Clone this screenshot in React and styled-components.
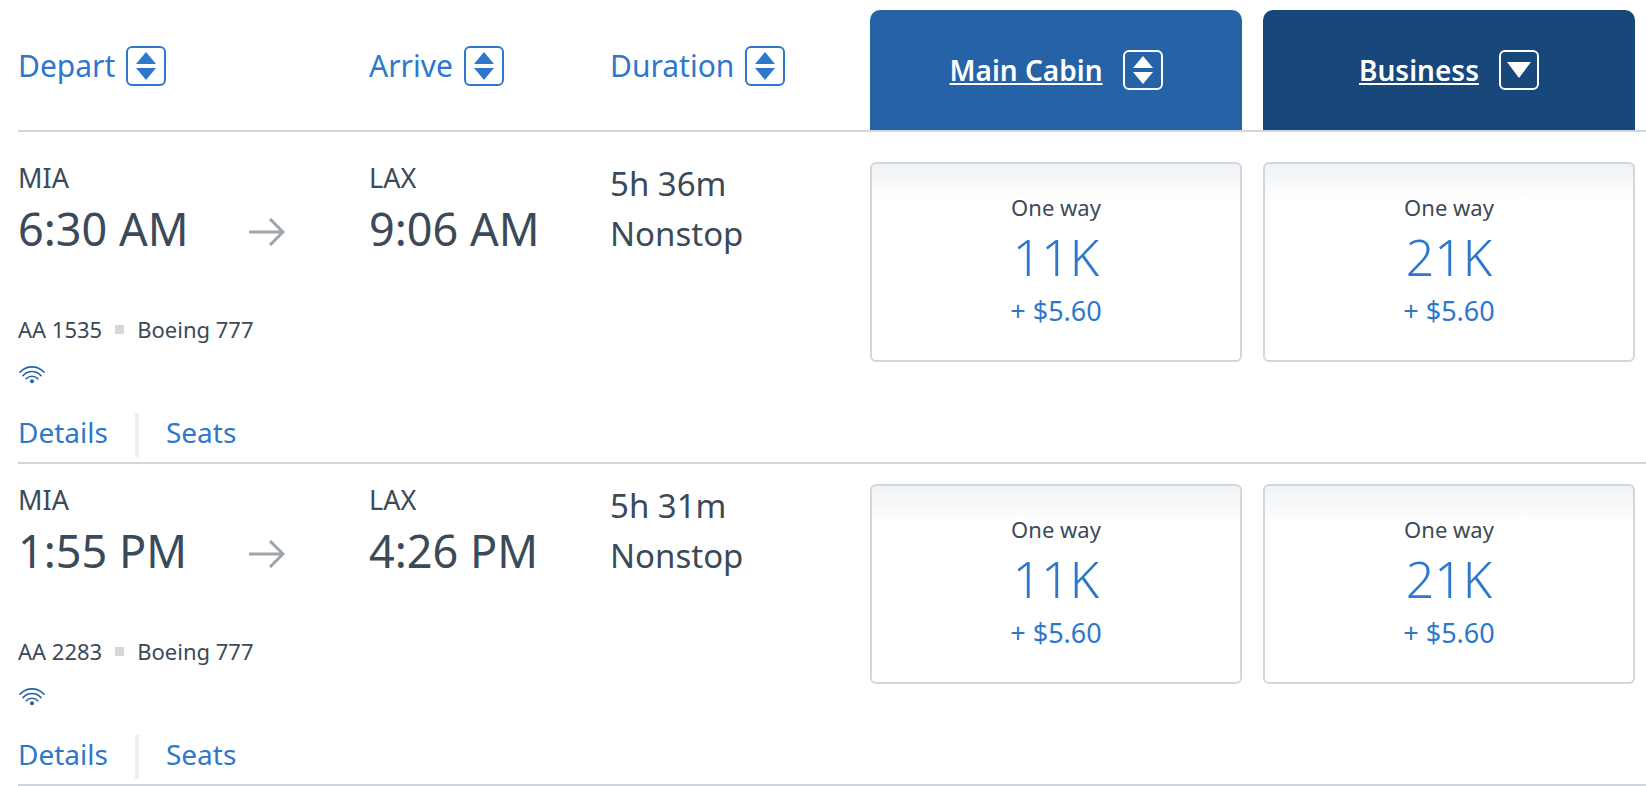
import React from "react";
import styled, { createGlobalStyle } from "styled-components";

const flights = [
  {
    id: "AA 1535",
    plane: "Boeing 777",
    from: "MIA",
    departs: "6:30 AM",
    to: "LAX",
    arrives: "9:06 AM",
    duration: "5h 36m",
    stops: "Nonstop",
    fares: ["11K", "21K"],
  },
  {
    id: "AA 2283",
    plane: "Boeing 777",
    from: "MIA",
    departs: "1:55 PM",
    to: "LAX",
    arrives: "4:26 PM",
    duration: "5h 31m",
    stops: "Nonstop",
    fares: ["11K", "21K"],
  },
];

function SortIcon() {
  return (
    <Icon width="40" height="40" viewBox="0 0 40 40" aria-hidden="true">
      <rect x="1" y="1" width="38" height="38" rx="5" />
      <path d="M20 6l10 12H10zM20 34l10-12H10z" />
    </Icon>
  );
}

function SortDownIcon() {
  return (
    <Icon width="40" height="40" viewBox="0 0 40 40" aria-hidden="true">
      <rect x="1" y="1" width="38" height="38" rx="5" />
      <path d="M8 12h24L20 28z" />
    </Icon>
  );
}

function ArrowIcon() {
  return (
    <Arrow width="36" height="28" viewBox="0 0 36 28" aria-hidden="true">
      <path d="M0 14h34M21 1l13 13-13 13" />
    </Arrow>
  );
}

function WifiIcon() {
  return (
    <Wifi width="28" height="18" viewBox="0 0 28 18" role="img" aria-label="Wi-Fi">
      <path d="M2 6.2a16.2 16.2 0 0 1 24 0M5 9.6a12 12 0 0 1 18 0M8.2 12.8a8 8 0 0 1 11.6 0" />
      <circle cx="14" cy="15.2" r="2" />
    </Wifi>
  );
}

function Flight({ flight }) {
  return (
    <Row>
      <InfoCell>
        <Airport>{flight.from}</Airport>
        <Leg>
          <Time>{flight.departs}</Time>
          <ArrowIcon />
        </Leg>
        <Aircraft>
          <span>{flight.id}</span>
          <Square />
          <span>{flight.plane}</span>
        </Aircraft>
        <WifiIcon />
        <Links>
          <a href="#details">Details</a>
          <a href="#seats">Seats</a>
        </Links>
      </InfoCell>
      <InfoCell>
        <Airport>{flight.to}</Airport>
        <Time>{flight.arrives}</Time>
      </InfoCell>
      <InfoCell>
        <Duration>{flight.duration}</Duration>
        <Duration>{flight.stops}</Duration>
      </InfoCell>
      {flight.fares.map((fare) => (
        <FareCell key={fare}>
          <Fare type="button">
            <FareType>One way</FareType>
            <Miles>{fare}</Miles>
            <Fee>+ $5.60</Fee>
          </Fare>
        </FareCell>
      ))}
    </Row>
  );
}

function App() {
  return (
    <Page>
      <GlobalStyle />
      <Results>
        <colgroup>
          <Col $width="351px" />
          <Col $width="241px" />
          <Col $width="250px" />
          <Col />
          <Col />
        </colgroup>
        <thead>
          <tr>
            {["Depart", "Arrive", "Duration"].map((label) => (
              <HeadCell key={label} scope="col">
                <SortButton type="button">
                  {label}
                  <SortIcon />
                </SortButton>
              </HeadCell>
            ))}
            <TabCell scope="col">
              <CabinTab type="button" $color="#2662a6">
                <span>Main Cabin</span>
                <SortIcon />
              </CabinTab>
            </TabCell>
            <TabCell scope="col">
              <CabinTab type="button" $color="#18477a">
                <span>Business</span>
                <SortDownIcon />
              </CabinTab>
            </TabCell>
          </tr>
        </thead>
        <tbody>
          {flights.map((flight) => (
            <Flight key={flight.id} flight={flight} />
          ))}
        </tbody>
      </Results>
    </Page>
  );
}

export default App;

const GlobalStyle = createGlobalStyle`
  * {
    box-sizing: border-box;
  }
  body {
    margin: 0;
    background: #fff;
    color: #3b4a59;
    font-family: "Noto Sans", "Open Sans", sans-serif;
  }
  button {
    font-family: inherit;
    cursor: pointer;
  }
`;

const Page = styled.main`
  padding: 10px 0 0 18px;
`;

const Results = styled.table`
  width: 100%;
  min-width: 1300px;
  table-layout: fixed;
  border-collapse: separate;
  border-spacing: 0;
`;

const Col = styled.col`
  width: ${(props) => props.$width || "auto"};
`;

const HeadCell = styled.th`
  padding: 36px 0 0;
  border-bottom: 2px solid #d0d8dd;
  text-align: left;
  vertical-align: top;
`;

const TabCell = styled.th`
  padding: 0 11px 0 10px;
  border-bottom: 2px solid #d0d8dd;
`;

const Icon = styled.svg`
  flex: none;

  rect {
    fill: none;
    stroke: currentColor;
    stroke-width: 2;
  }
  path {
    fill: currentColor;
  }
`;

const SortButton = styled.button`
  display: flex;
  align-items: center;
  gap: 11px;
  padding: 0;
  border: 0;
  background: none;
  color: #2e78cb;
  font-size: 30px;
  font-weight: 400;
  line-height: 38px;
`;

const CabinTab = styled.button`
  display: flex;
  align-items: center;
  justify-content: center;
  gap: 20px;
  width: 100%;
  height: 120px;
  padding: 0;
  border: 0;
  border-radius: 10px 10px 0 0;
  background: ${(props) => props.$color};
  color: #fff;
  font-size: 28px;
  font-weight: 600;
  line-height: 40px;

  span {
    text-decoration: underline;
    text-decoration-thickness: 2px;
    text-underline-offset: 2px;
    text-decoration-skip-ink: none;
  }
`;

const InfoCell = styled.td`
  padding: 17px 0 5px;
  border-bottom: 2px solid #d0d8dd;
  vertical-align: top;
`;

const FareCell = styled.td`
  padding: 20px 11px 0 10px;
  border-bottom: 2px solid #d0d8dd;
  vertical-align: top;
`;

const Row = styled.tr`
  &:first-child ${InfoCell} {
    padding-top: 27px;
  }
  &:first-child ${FareCell} {
    padding-top: 30px;
  }
`;

const Airport = styled.div`
  font-size: 27px;
  line-height: 38px;
`;

const Leg = styled.div`
  display: flex;
  align-items: center;
  justify-content: space-between;
  padding-right: 84px;
`;

const Time = styled.div`
  font-size: 45px;
  line-height: 64px;
`;

const Arrow = styled.svg`
  margin-top: 6px;
  fill: none;
  stroke: #9da5aa;
  stroke-width: 3;
`;

const Aircraft = styled.div`
  display: flex;
  align-items: center;
  gap: 13px;
  margin-top: 51px;
  font-size: 22px;
  line-height: 34px;
`;

const Square = styled.span`
  width: 9px;
  height: 9px;
  background: #d0d8dd;
`;

const Wifi = styled.svg`
  display: block;
  margin-top: 20px;

  path {
    fill: none;
    stroke: #2662a6;
    stroke-width: 1.6;
    stroke-linecap: round;
  }
  circle {
    fill: #2662a6;
  }
`;

const Links = styled.div`
  display: flex;
  height: 44px;
  margin-top: 29px;
  font-size: 28px;
  line-height: 38px;

  a {
    color: #2e78cb;
    text-decoration: none;
  }
  a + a {
    margin-left: 27px;
    padding-left: 27px;
    border-left: 4px solid #eceff1;
  }
`;

const Duration = styled.div`
  font-size: 33px;
  line-height: 50px;
`;

const Fare = styled.button`
  display: flex;
  flex-direction: column;
  align-items: center;
  width: 100%;
  padding: 28px 0 30px;
  border: 2px solid #d0d8dd;
  border-radius: 6px;
  background: linear-gradient(#f0f2f5, #fff 38px);
  color: #2e78cb;
`;

const FareType = styled.span`
  color: #3b4a59;
  font-size: 22px;
  line-height: 30px;
`;

const Miles = styled.span`
  font-size: 50px;
  font-weight: 300;
  line-height: 70px;
`;

const Fee = styled.span`
  font-size: 27px;
  line-height: 38px;
`;
